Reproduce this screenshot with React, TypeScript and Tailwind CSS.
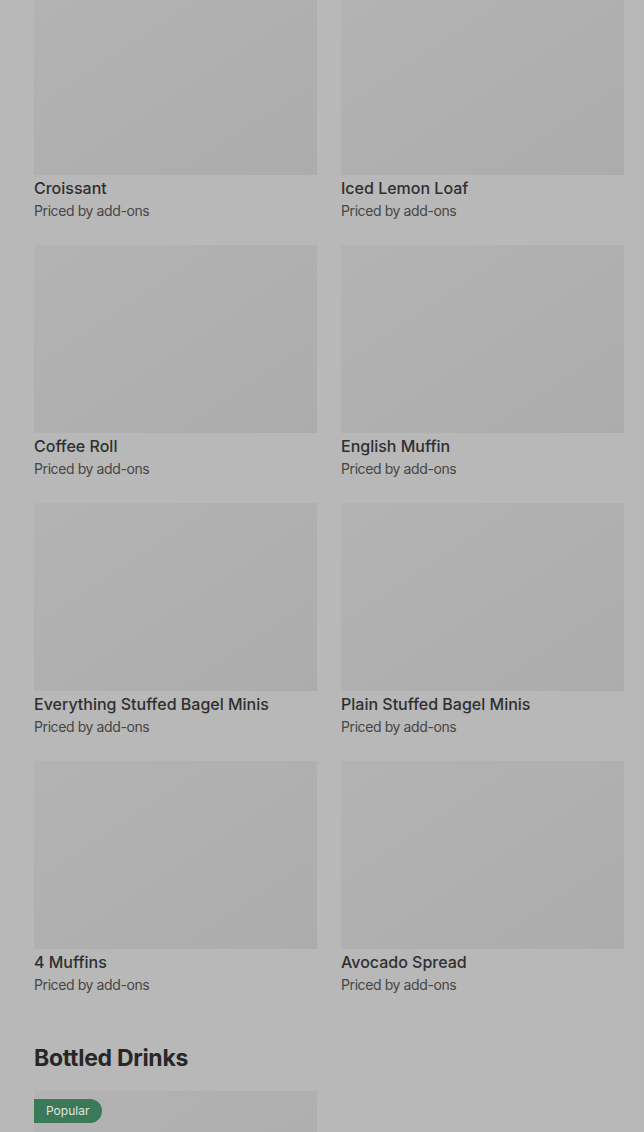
const items = [
  'Croissant',
  'Iced Lemon Loaf',
  'Coffee Roll',
  'English Muffin',
  'Everything Stuffed Bagel Minis',
  'Plain Stuffed Bagel Minis',
  '4 Muffins',
  'Avocado Spread',
];

const ItemCard = ({ name }: { name: string }) => (
  <div className="flex flex-col">
    <div className="h-[188px] w-full bg-gradient-to-br from-[#b3b3b3] to-[#acacac]" />
    <div className="mt-[1px] text-[16px] leading-6 font-medium text-[#2f2f2f]">{name}</div>
    <div className="mt-[1px] text-[14px] leading-5 tracking-[-0.4px] text-[#464646]">Priced by add-ons</div>
  </div>
);

export default function App() {
  return (
    <div
      className="min-h-[1132px] w-full overflow-hidden bg-[#b8b8b8] pl-[34px] pr-[20px]"
      style={{ fontFamily: 'Inter, "Noto Sans", sans-serif' }}
    >
      <div className="-mt-[13px] grid grid-cols-2 gap-x-[24px] gap-y-[24px]">
        {items.map((name) => (
          <ItemCard key={name} name={name} />
        ))}
      </div>
      <h2 className="mt-[47px] text-[23px] leading-8 font-bold tracking-[-0.3px] text-[#272727]">
        Bottled Drinks
      </h2>
      <div className="mt-[17px] grid grid-cols-2 gap-x-[24px]">
        <div className="relative h-[188px] bg-gradient-to-br from-[#b3b3b3] to-[#acacac]">
          <span className="absolute left-0 top-[8px] rounded-r-full bg-[#3b7a58] py-[3px] pl-[12px] pr-[13px] text-[12px] leading-[18px] text-[#e2e2e2]">
            Popular
          </span>
        </div>
      </div>
    </div>
  );
}
